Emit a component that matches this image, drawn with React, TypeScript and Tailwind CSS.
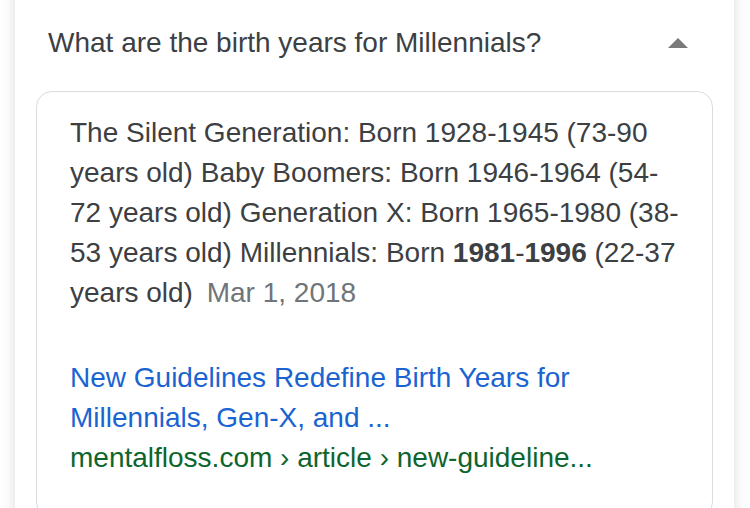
import React from 'react'

const font = { fontFamily: '"Liberation Sans", Arial, sans-serif' }

function Caret() {
  return (
    <svg width="20" height="10" viewBox="0 0 20 10" className="block">
      <polygon points="10,0 20,10 0,10" fill="#7a7a7a" />
    </svg>
  )
}

export default function App() {
  return (
    <div className="w-[750px] h-[508px] overflow-hidden bg-white" style={font}>
      <div className="ml-[15px] w-[719px] h-[560px] -mt-[40px] bg-white shadow-[0_0_14px_rgba(0,0,0,0.14)]">
        <div className="flex items-center justify-between pl-[33px] pr-[46px] pt-[67px] h-[131px] pb-[32px]">
          <h2 className="text-[28px] leading-[32px] text-[#3c4043]">What are the birth years for Millennials?</h2>
          <Caret />
        </div>
        <div className="mx-[21px] rounded-[16px] border border-[#dadce0] pt-[21px] pl-[33px] pr-[30px] pb-10">
          <p className="text-[28px] leading-[40px] text-[#3c4043]">
            The Silent Generation: Born 1928-1945 (73-90 years old) Baby Boomers: Born 1946-1964 (54-72 years old) Generation X: Born 1965-1980 (38-53 years old) Millennials: Born <b>1981</b>-<b>1996</b> (22-37 years old){' '}
            <span className="ml-[6px] text-[#70757a]">Mar 1, 2018</span>
          </p>
          <div className="mt-[45px]">
            <a className="block text-[28px] leading-[40px] text-[#1a64d2]">
              New Guidelines Redefine Birth Years for Millennials, Gen-X, and ...
            </a>
            <div className="text-[28px] leading-[39px] text-[#0d652d]">
              mentalfloss.com › article › new-guideline...
            </div>
          </div>
        </div>
      </div>
    </div>
  )
}
